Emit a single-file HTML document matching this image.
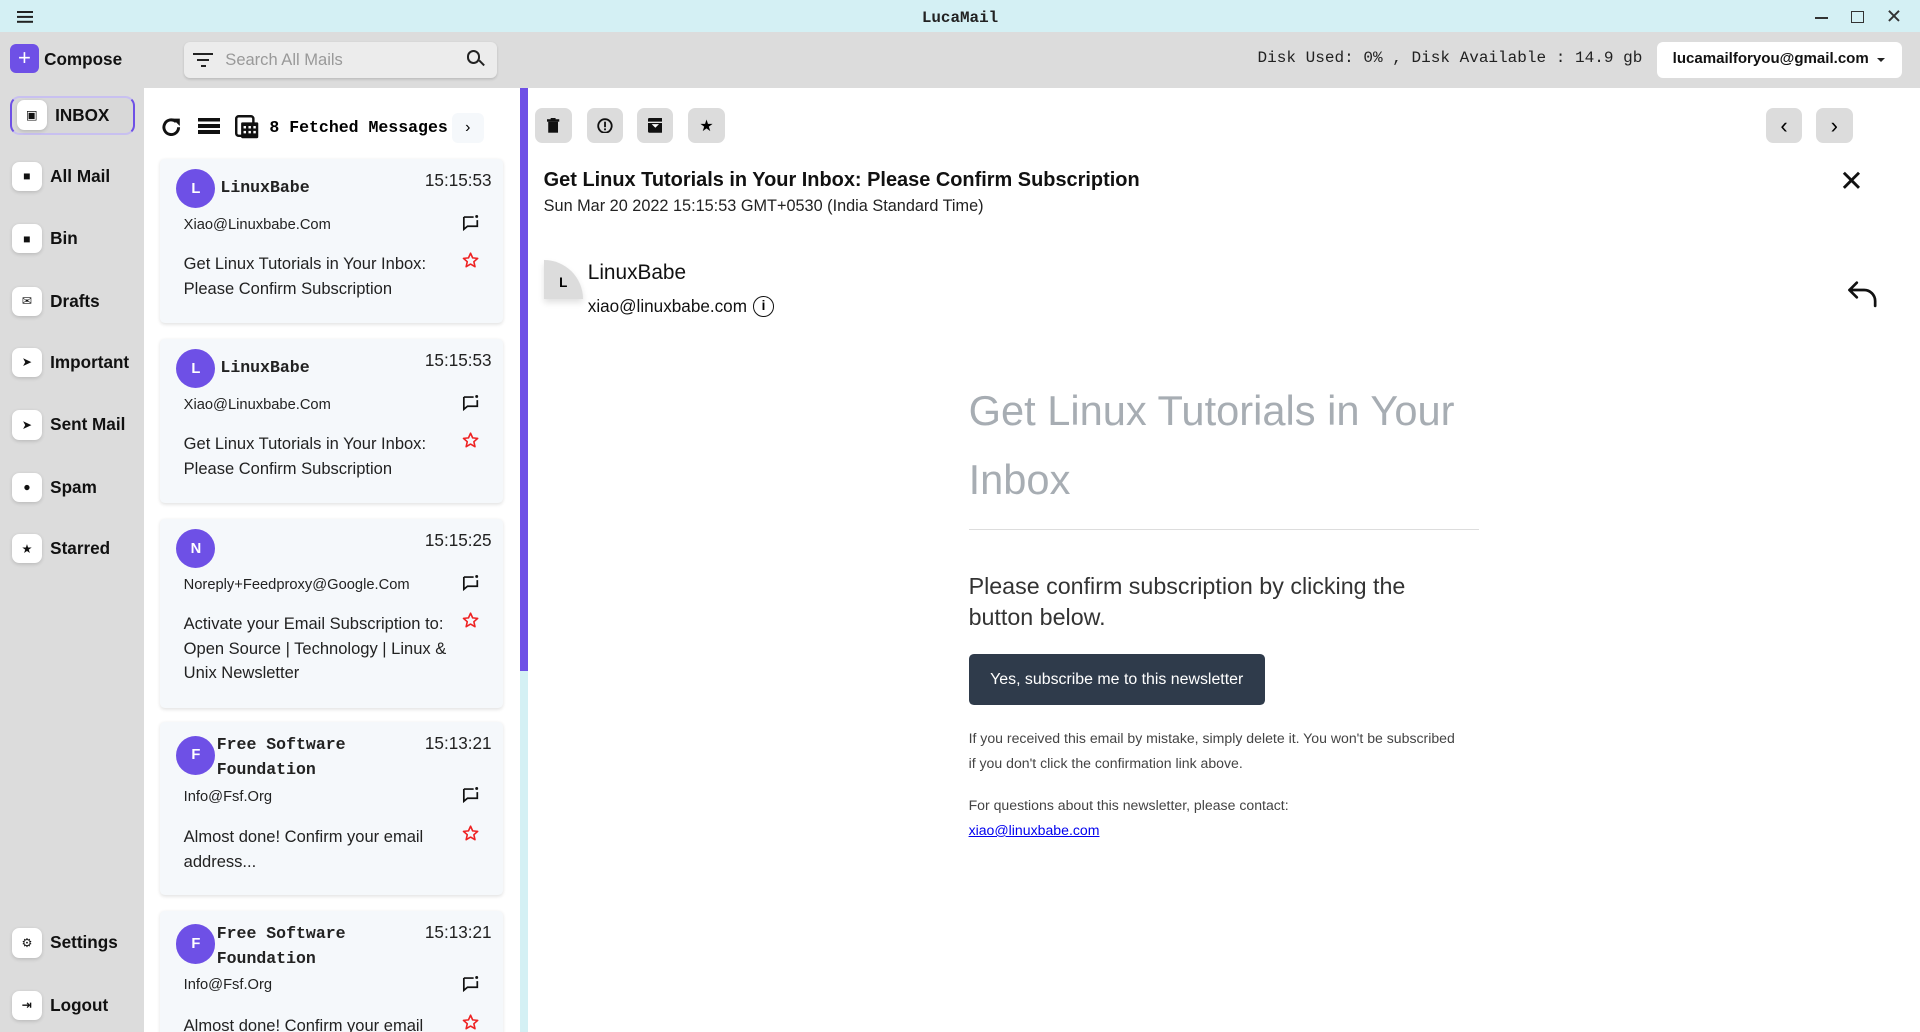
<!DOCTYPE html>
<html><head><meta charset="utf-8"><style>
*{box-sizing:border-box;margin:0;padding:0}
html,body{width:1920px;height:1032px;overflow:hidden;background:#fff}
#w{width:1568px;height:843px;zoom:1.22449;position:relative;font-family:"Liberation Sans","DejaVu Sans",sans-serif;overflow:hidden}
.a{position:absolute}
.mono{font-family:"Liberation Mono",monospace}
.nav{position:absolute;left:10px;display:flex;align-items:center;font-weight:bold;font-size:14px;color:#111}
.nav i{width:24px;height:24px;background:#fff;border-radius:6px;margin-right:7px;display:flex;align-items:center;justify-content:center;font-style:normal;font-size:10px;box-shadow:0 1px 3px rgba(0,0,0,.15)}
.card{position:absolute;left:131px;width:280px;background:#f5f8fb;border-radius:4px;box-shadow:0 1px 3px rgba(0,0,0,.12);font-size:13.5px;color:#222}
.av{position:absolute;left:13px;width:32px;height:32px;border-radius:50%;background:#6e50e6;color:#fff;font-weight:bold;font-size:12px;display:flex;align-items:center;justify-content:center}
.tb{position:absolute;top:88px;width:30px;height:29px;background:#dcdcdc;border-radius:6px;display:flex;align-items:center;justify-content:center;font-size:13px}
.ch{position:absolute;left:246px}
.st{position:absolute;left:246px}
</style></head><body><div id="w">
<svg width="0" height="0" style="position:absolute"><defs>
<symbol id="chat" viewBox="0 0 14 14"><path d="M1.5 2.5h8M1.5 2.5v10l3-2.5h8v-5" fill="none" stroke="#111" stroke-width="1.4"/><circle cx="12" cy="2" r="1.2" fill="#111"/></symbol>
<symbol id="star" viewBox="0 0 14 14"><path d="M7 1l1.7 3.8 4.1.4-3.1 2.7.9 4.1L7 9.9 3.4 12l.9-4.1L1.2 5.2l4.1-.4z" fill="none" stroke="#e22" stroke-width="1.3" stroke-linejoin="round"/></symbol>
</defs></svg>
<div class="a" style="left:0;top:0;width:1568px;height:26px;background:#d4f0f4"></div>
<div class="a" style="left:14px;top:9px;width:13px;height:2px;background:#222;box-shadow:0 4px 0 #222,0 8px 0 #222"></div>
<div class="a mono" style="left:0;width:1568px;top:7px;text-align:center;font-size:13px;font-weight:bold;color:#222">LucaMail</div>
<div class="a" style="left:1482px;top:14px;width:11px;height:1.5px;background:#333"></div>
<div class="a" style="left:1512px;top:9px;width:10px;height:10px;border:1.5px solid #333"></div>
<div class="a" style="left:1540px;top:4px;font-size:16px;color:#333">✕</div>
<div class="a" style="left:0;top:26px;width:1568px;height:46px;background:#dcdcdc"></div>
<div class="a" style="left:0;top:72px;width:118px;height:771px;background:#dcdcdc"></div>
<div class="a" style="left:8px;top:36px;width:24px;height:24px;background:#6e50e6;border-radius:5px;color:#fff;font-size:18px;text-align:center;line-height:23px">+</div>
<div class="a" style="left:36px;top:40px;font-weight:bold;font-size:14px;color:#111">Compose</div>
<div class="a" style="left:150px;top:34px;width:256px;height:30px;background:#ececec;border-radius:5px;box-shadow:0 1px 2px rgba(0,0,0,.15)"></div>
<div class="a" style="left:158px;top:43px;width:16px;height:2px;background:#222"></div>
<div class="a" style="left:161px;top:48px;width:10px;height:2px;background:#222"></div>
<div class="a" style="left:164px;top:53px;width:4px;height:2px;background:#222"></div>
<div class="a" style="left:184px;top:41px;font-size:13.5px;color:#999">Search All Mails</div>
<div class="a" style="left:381px;top:41px;width:11px;height:11px;border:2px solid #222;border-radius:50%"></div>
<div class="a" style="left:390px;top:51px;width:6px;height:2px;background:#222;transform:rotate(45deg)"></div>
<div class="a mono" style="left:1027px;top:40px;font-size:13.1px;color:#222">Disk Used: 0% , Disk Available : 14.9 gb</div>
<div class="a" style="left:1353px;top:34px;width:200px;height:30px;background:#fff;border-radius:5px"></div>
<div class="a" style="left:1366px;top:41px;font-size:12.3px;font-weight:bold;color:#111">lucamailforyou@gmail.com</div>
<div class="a" style="left:1533px;top:47px;border:4px solid transparent;border-top:4px solid #222"></div>
<div class="a" style="left:8px;top:78px;width:102px;height:32px;border:2px solid #6e50e6;border-top-color:#c8c0f0;border-bottom-color:#c8c0f0;border-radius:8px;background:#d8d8d8"></div>
<div class="nav" style="top:82px;left:14px"><i>▣</i>INBOX</div>
<div class="nav" style="top:132px"><i>■</i>All Mail</div>
<div class="nav" style="top:183px"><i>■</i>Bin</div>
<div class="nav" style="top:234px"><i>✉</i>Drafts</div>
<div class="nav" style="top:284px"><i>➤</i>Important</div>
<div class="nav" style="top:335px"><i>➤</i>Sent Mail</div>
<div class="nav" style="top:386px"><i>●</i>Spam</div>
<div class="nav" style="top:436px"><i>★</i>Starred</div>
<div class="nav" style="top:758px"><i>⚙</i>Settings</div>
<div class="nav" style="top:809px"><i>⇥</i>Logout</div>
<svg class="a" style="left:130px;top:94px" width="20" height="20" viewBox="0 0 20 20"><path d="M16 10a6 6 0 1 1-2-4.5" fill="none" stroke="#111" stroke-width="2.4"/><path d="M11 3h6v6z" fill="#111"/></svg>
<div class="a" style="left:162px;top:96px;width:18px;height:15px;background:repeating-linear-gradient(#111 0 3px,#fff 3px 5px)"></div>
<svg class="a" style="left:192px;top:94px" width="20" height="20" viewBox="0 0 20 20"><rect x="1" y="1" width="14" height="16" rx="2" fill="none" stroke="#111" stroke-width="2"/><rect x="5" y="6" width="14" height="13" rx="1" fill="#111"/><g fill="#fff"><rect x="7" y="9" width="2" height="2"/><rect x="11" y="9" width="2" height="2"/><rect x="15" y="9" width="2" height="2"/><rect x="7" y="13" width="2" height="2"/><rect x="11" y="13" width="2" height="2"/><rect x="15" y="13" width="2" height="2"/></g></svg>
<div class="a mono" style="left:220px;top:96px;font-size:13.5px;font-weight:bold">8 Fetched Messages</div>
<div class="a" style="left:369px;top:92px;width:26px;height:25px;background:#f5f8fb;border-radius:5px;text-align:center;line-height:24px;font-size:13px">›</div>

<div class="card" style="top:130px;height:134px"><div class="av" style="top:8px">L</div><div class="a mono" style="left:49px;top:15px;font-weight:bold;font-size:13.5px">LinuxBabe</div><div class="a" style="left:216px;top:9px;font-size:14px">15:15:53</div><div class="a" style="left:19px;top:47px;font-size:12px">Xiao@Linuxbabe.Com</div><svg class="ch" style="top:45px" width="14" height="14"><use href="#chat"/></svg><div class="a" style="left:19px;top:76px;line-height:20px">Get Linux Tutorials in Your Inbox:<br>Please Confirm Subscription</div><svg class="st" style="top:76px" width="14" height="14"><use href="#star"/></svg></div>
<div class="card" style="top:277px;height:134px"><div class="av" style="top:8px">L</div><div class="a mono" style="left:49px;top:15px;font-weight:bold;font-size:13.5px">LinuxBabe</div><div class="a" style="left:216px;top:9px;font-size:14px">15:15:53</div><div class="a" style="left:19px;top:47px;font-size:12px">Xiao@Linuxbabe.Com</div><svg class="ch" style="top:45px" width="14" height="14"><use href="#chat"/></svg><div class="a" style="left:19px;top:76px;line-height:20px">Get Linux Tutorials in Your Inbox:<br>Please Confirm Subscription</div><svg class="st" style="top:76px" width="14" height="14"><use href="#star"/></svg></div>
<div class="card" style="top:424px;height:154px"><div class="av" style="top:8px">N</div><div class="a" style="left:216px;top:9px;font-size:14px">15:15:25</div><div class="a" style="left:19px;top:47px;font-size:12px">Noreply+Feedproxy@Google.Com</div><svg class="ch" style="top:45px" width="14" height="14"><use href="#chat"/></svg><div class="a" style="left:19px;top:76px;line-height:20px">Activate your Email Subscription to:<br>Open Source | Technology | Linux &amp;<br>Unix Newsletter</div><svg class="st" style="top:76px" width="14" height="14"><use href="#star"/></svg></div>
<div class="card" style="top:590px;height:141px"><div class="av" style="top:11px">F</div><div class="a mono" style="left:46px;top:9px;font-weight:bold;font-size:13.5px;line-height:20px">Free Software<br>Foundation</div><div class="a" style="left:216px;top:9px;font-size:14px">15:13:21</div><div class="a" style="left:19px;top:54px;font-size:12px">Info@Fsf.Org</div><svg class="ch" style="top:52px" width="14" height="14"><use href="#chat"/></svg><div class="a" style="left:19px;top:84px;line-height:20px">Almost done! Confirm your email<br>address...</div><svg class="st" style="top:84px" width="14" height="14"><use href="#star"/></svg></div>
<div class="card" style="top:744px;height:120px"><div class="av" style="top:11px">F</div><div class="a mono" style="left:46px;top:9px;font-weight:bold;font-size:13.5px;line-height:20px">Free Software<br>Foundation</div><div class="a" style="left:216px;top:9px;font-size:14px">15:13:21</div><div class="a" style="left:19px;top:54px;font-size:12px">Info@Fsf.Org</div><svg class="ch" style="top:52px" width="14" height="14"><use href="#chat"/></svg><div class="a" style="left:19px;top:84px;line-height:20px">Almost done! Confirm your email</div><svg class="st" style="top:84px" width="14" height="14"><use href="#star"/></svg></div>

<div class="a" style="left:425px;top:72px;width:6px;height:476px;background:#6e50e6"></div>
<div class="a" style="left:425px;top:548px;width:6px;height:295px;background:#d4f0f4"></div>
<div class="tb" style="left:437px"><svg width="10" height="12"><rect x="0" y="1" width="10" height="2" fill="#111"/><rect x="3" y="0" width="4" height="2" fill="#111"/><rect x="1" y="3" width="8" height="9" fill="#111"/></svg></div>
<div class="tb" style="left:479px"><svg width="13" height="13"><circle cx="6.5" cy="6.5" r="5.5" fill="none" stroke="#111" stroke-width="1.5"/><rect x="5.8" y="3" width="1.5" height="4.5" fill="#111"/><rect x="5.8" y="8.5" width="1.5" height="1.5" fill="#111"/></svg></div>
<div class="tb" style="left:520px"><svg width="12" height="12"><rect x="0" y="0" width="12" height="12" rx="1" fill="#111"/><path d="M3 5l3 3 3-3z" fill="#fff"/><rect x="0" y="3" width="12" height="1" fill="#fff"/></svg></div>
<div class="tb" style="left:562px">★</div>
<div class="tb" style="left:1442px;font-size:18px">‹</div>
<div class="tb" style="left:1483px;font-size:18px">›</div>
<div class="a" style="left:444px;top:138px;font-size:16.3px;font-weight:bold;color:#111">Get Linux Tutorials in Your Inbox: Please Confirm Subscription</div>
<div class="a" style="left:444px;top:161px;font-size:13.3px;color:#222">Sun Mar 20 2022 15:15:53 GMT+0530 (India Standard Time)</div>
<div class="a" style="left:1502px;top:134px;font-size:24px;color:#111">✕</div>
<div class="a" style="left:444px;top:212px;width:32px;height:32px;background:#dcdcdc;border-radius:0 32px 0 0;box-shadow:0 3px 5px rgba(0,0,0,.12);font-size:11px;font-weight:bold;text-align:center;line-height:38px">L</div>
<div class="a" style="left:480px;top:213px;font-size:17px;color:#111">LinuxBabe</div>
<div class="a" style="left:480px;top:242px;font-size:14px;color:#111">xiao@linuxbabe.com</div>
<div class="a" style="left:615px;top:242px;width:17px;height:17px;border:1.5px solid #111;border-radius:50%;font-size:11px;text-align:center;line-height:14px;font-weight:bold">i</div>
<svg class="a" style="left:1508px;top:228px" width="26" height="24" viewBox="0 0 26 24"><path d="M8 3L2 9l6 6M2 9h12a9 9 0 0 1 9 9v4" fill="none" stroke="#111" stroke-width="2.2" stroke-linecap="round" stroke-linejoin="round"/></svg>
<div class="a" style="left:791px;top:308px;font-size:34px;line-height:56px;color:#a7adb3">Get Linux Tutorials in Your<br>Inbox</div>
<div class="a" style="left:791px;top:432px;width:417px;height:1px;background:#ddd"></div>
<div class="a" style="left:791px;top:466px;font-size:19px;line-height:26px;color:#333">Please confirm subscription by clicking the<br>button below.</div>
<div class="a" style="left:791px;top:534px;width:242px;height:42px;background:#2f3b4b;border-radius:4px;color:#fff;font-size:13px;text-align:center;line-height:42px">Yes, subscribe me to this newsletter</div>
<div class="a" style="left:791px;top:593px;font-size:11.5px;line-height:20px;color:#444">If you received this email by mistake, simply delete it. You won't be subscribed<br>if you don't click the confirmation link above.</div>
<div class="a" style="left:791px;top:648px;font-size:11.5px;line-height:20px;color:#444">For questions about this newsletter, please contact:<br><span style="color:#00e;text-decoration:underline">xiao@linuxbabe.com</span></div>
</div></body></html>
